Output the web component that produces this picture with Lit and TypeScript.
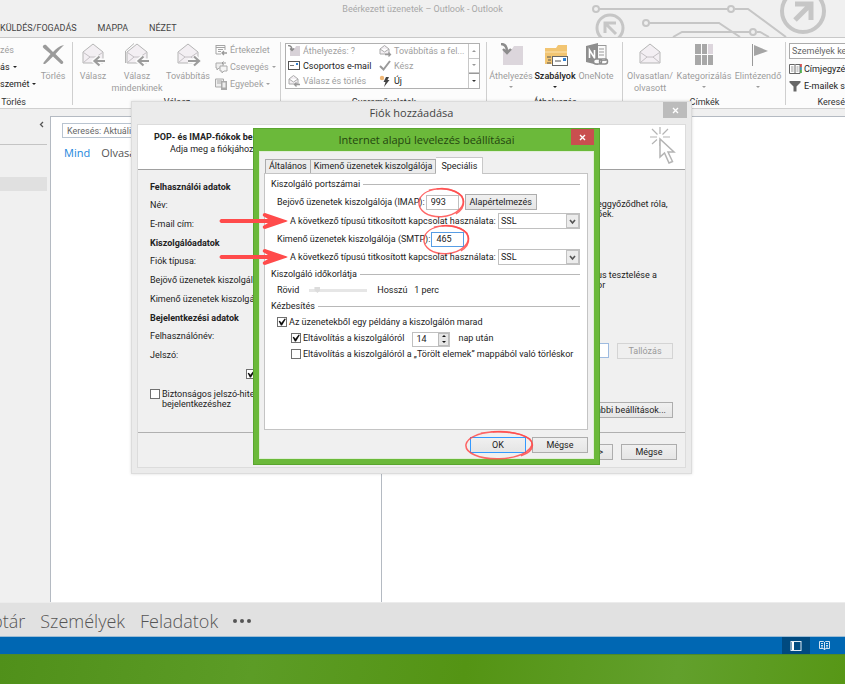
import { LitElement, html, svg, css, nothing } from "lit";
import { customElement, property } from "lit/decorators.js";

const base = css`
  * { box-sizing: border-box; }
  button, input, select { font: inherit; color: inherit; margin: 0; }
  button { padding: 0; border: 0; background: none; white-space: nowrap; }
  a { color: inherit; text-decoration: none; }
  svg { display: block; flex: none; }
`;

const controls = css`
  .push {
    height: 16px;
    padding: 0 6px;
    border: 1px solid #adadad;
    background: linear-gradient(#f0f0f0, #e5e5e5);
    line-height: 14px;
    text-align: center;
  }
  .push.off { color: #9a9a9a; border-color: #d4d4d4; background: #efefef; }
  .push.main { border-color: #3399ff; }
  .tick {
    appearance: none;
    width: 10px;
    height: 10px;
    flex: none;
    border: 1px solid #707070;
    background: #fff;
    display: grid;
    place-items: center;
  }
  .tick:checked::after {
    content: "";
    width: 8px;
    height: 8px;
    background: #111;
    clip-path: polygon(8% 42%, 24% 34%, 42% 58%, 84% 6%, 98% 14%, 50% 94%, 36% 94%);
  }
  .close {
    position: absolute;
    top: 0;
    height: 16px;
    display: grid;
    place-items: center;
  }
  .title {
    margin: 0;
    height: 22px;
    line-height: 22px;
    font-family: "Open Sans", "Noto Sans", sans-serif;
    font-size: 11px;
    font-weight: 400;
    text-align: center;
  }
`;

const cross = svg`<path d="M1 1L6 6M6 1L1 6" stroke="#fff" stroke-width="1.4" fill="none"/>`;

const envelope = svg`<path d="M2 9L12 1L22 9V20H2Z" fill="#f3eff3" stroke="#b5b5b5"/><path d="M2.5 9.5L9 14H15L21.5 9.5M2.5 19.5L9 14M21.5 19.5L15 14" fill="none" stroke="#c4c0c4"/>`;
const arrowL = svg`<path d="M24 18H14M18.500 13.500L13.500 18L18.500 22.500" fill="none" stroke="#fbfbfb" stroke-width="5"/><path d="M24 18H14M18.500 13.500L13.500 18L18.500 22.500" fill="none" stroke="#9c9c9c" stroke-width="2.200"/>`;
const arrowR = svg`<path d="M12 18H22M18 13.500L23 18L18 22.500" fill="none" stroke="#fbfbfb" stroke-width="5"/><path d="M12 18H22M18 13.500L23 18L18 22.500" fill="none" stroke="#9c9c9c" stroke-width="2.200"/>`;

const big: Record<string, unknown> = {
  del: svg`<path d="M2 3C4 1 5 2 6 3L12 9C15 6 18 3 23 2C20 5 17 8 14.500 11L22 18.500C23 20 21 22 19.500 20.500L12 13.500C9 16 7 19 4 21C2 21.500 2 20 3 19L9.500 11L3 5.500C2 4.500 1.500 4 2 3Z" fill="#9b9b9b"/>`,
  reply: svg`${envelope}${arrowL}`,
  replyAll: svg`<path d="M0.500 20V8L9 0.500" fill="none" stroke="#b5b5b5"/>${envelope}${arrowL}`,
  forward: svg`${envelope}${arrowR}`,
  move: svg`<path d="M4 6H13L15 3H24V22H4Z" fill="#dcd6dc"/><path d="M2 1C6 1 8 3 8 9M4 6L8 10L12 6" fill="none" stroke="#8c8c8c" stroke-width="2.400"/>`,
  rules: svg`<path d="M2 5H13L15 2H24V21H2Z" fill="#f2c572"/><path d="M2 9H24" stroke="#fbe3b3"/><rect x="9.500" y="13.500" width="15" height="9" fill="#fff" stroke="#666"/><rect x="20" y="15" width="3" height="3" fill="#2f7fd0"/><path d="M12 18H18M4 14H8M5 17H8M4 20H8" stroke="#555"/>`,
  onenote: svg`<rect x="12" y="2.500" width="10" height="15" fill="#fafafa" stroke="#999"/><path d="M15 6H20M15 9H20M15 12H20" stroke="#999"/><path d="M2 3L14 0V22L2 19Z" fill="#8e8e8e"/><path d="M5.500 15V7L10.500 15V7" fill="none" stroke="#fff" stroke-width="1.600"/><rect x="9.500" y="16" width="8" height="5" rx="2.500" fill="#fbfbfb" stroke="#8e8e8e" stroke-width="1.500"/><rect x="15.500" y="16" width="8" height="5" rx="2.500" fill="none" stroke="#8e8e8e" stroke-width="1.500"/>`,
  unread: envelope,
  cats: svg`<path d="M3 1H9V11H3ZM10 1H15V11H10ZM3 12H9V22H3ZM10 12H15V22H10ZM16 12H21V22H16Z" fill="#a8a8a8"/><path d="M16 1H21V11H16Z" fill="#ddd6dd"/>`,
  flag: svg`<path d="M6.500 1V23" stroke="#999"/><path d="M8 2L22 8L8 13Z" fill="#a5a5a5"/>`,
};

const small: Record<string, unknown> = {
  meeting: svg`<path d="M1 1.500H10V6M1 1V10H6M1 3.500H10M3 5.500H8M3 7.500H6" fill="none" stroke="#a5a5a5"/><path d="M12 9H7M9 7L7 9L9 11" fill="none" stroke="#999" stroke-width="1.300"/>`,
  chat: svg`<path d="M1 2H8V7H4L2 9V7H1Z" fill="#eee" stroke="#aaa"/><path d="M5 5H12V10H9L7 12V10H5Z" fill="#f5f5f5" stroke="#aaa"/><path d="M11 2H7M8.500 0.500L7 2L8.500 3.500" fill="none" stroke="#999"/>`,
  more: svg`<path d="M0.500 1H8.500V9H0.500ZM2 3H7M2 5H6" fill="#eee" stroke="#aaa"/><rect x="6" y="3" width="6" height="9" fill="#aaa"/><rect x="7.500" y="4.500" width="3" height="5" fill="#eee"/>`,
  folder: svg`<path d="M2 3H7L8 1H12V11H2Z" fill="#d8d2d8"/><path d="M0 0.500C3 0.500 4 2 4 5M2 3.500L4 5.500L6 3.500" fill="none" stroke="#8c8c8c" stroke-width="1.300"/>`,
  team: svg`<rect x="0.500" y="1.500" width="11" height="8" fill="#fff" stroke="#555"/><rect x="8" y="3" width="2" height="2" fill="#2f7fd0"/><path d="M2 5.500H6" stroke="#777"/>`,
  mailRight: svg`<path d="M1 4L5.500 0.500L10 4V9H1ZM1 4L5.500 7L10 4" fill="#f3eff3" stroke="#aaa"/><path d="M6 9.500H11M9.500 7.500L11.500 9.500L9.500 11.500" fill="none" stroke="#999" stroke-width="1.300"/>`,
  mailLeft: svg`<path d="M1 4L5.500 0.500L10 4V9H1ZM1 4L5.500 7L10 4" fill="#f3eff3" stroke="#aaa"/><path d="M12 9.500H7M8.500 7.500L6.500 9.500L8.500 11.500" fill="none" stroke="#999" stroke-width="1.300"/>`,
  done: svg`<path d="M1 6L4.500 9.500L11 1" fill="none" stroke="#9a9a9a" stroke-width="2"/>`,
  bolt: svg`<path d="M7 2H10L8.500 5H10.500L5 12L6.500 7H4.500Z" fill="#444"/><circle cx="3" cy="3" r="2.200" fill="#f0b775"/>`,
  book: svg`<path d="M0.500 1.500H5.500L6 2L6.500 1.500H11V10.500H0.500ZM6 2V11" fill="#fff" stroke="#666"/><path d="M2 4H4.500M2 6H4.500M2 8H4.500M7.500 4H9.500M7.500 6H9.500M7.500 8H9.500" stroke="#999"/><path d="M12 1V4" stroke="#c33" stroke-width="1.500"/><path d="M12 4V7" stroke="#38a" stroke-width="1.500"/><path d="M12 7V10" stroke="#3a3" stroke-width="1.500"/>`,
  funnel: svg`<path d="M0.500 1H11.500V2.500L7.500 6.500V11.500H4.500V6.500L0.500 2.500Z" fill="#666"/>`,
};

@customElement("ribbon-button")
class RibbonButton extends LitElement {
  @property() icon = "";
  @property() label = "";
  @property() label2 = "";
  @property({ type: Boolean }) drop = false;
  @property({ type: Boolean }) active = false;
  static styles = [base, css`
    :host { display: block; }
    .btn { display: flex; flex-direction: column; align-items: center; width: 100%; color: #9c9c9c; line-height: 12px; }
    .btn.active { color: #222; font-weight: 500; }
    .lbl { margin-top: 3px; }
    .tri { border: 2px solid transparent; border-top-color: currentColor; border-bottom: 0; margin-top: 4px; }
  `];
  render() {
    return html`<button class="btn ${this.active ? "active" : ""}">
      <svg width="25" height="24" viewBox="0 0 25 24">${big[this.icon]}</svg>
      <span class="lbl">${this.label}</span>
      ${this.label2 ? html`<span>${this.label2}</span>` : nothing}
      ${this.drop ? html`<span class="tri"></span>` : nothing}
    </button>`;
  }
}

@customElement("ribbon-item")
class RibbonItem extends LitElement {
  @property() icon = "";
  @property() label = "";
  @property({ type: Boolean }) drop = false;
  @property({ type: Boolean }) active = false;
  static styles = [base, css`
    :host { display: block; }
    .btn { display: flex; align-items: center; gap: 2px; color: #a0a0a0; height: 14px; }
    .btn.active { color: #222; }
    .tri { border: 2px solid transparent; border-top-color: currentColor; border-bottom: 0; margin-left: 1px; }
  `];
  render() {
    return html`<button class="btn ${this.active ? "active" : ""}">
      ${this.icon ? html`<svg width="13" height="12" viewBox="0 0 13 12">${small[this.icon]}</svg>` : nothing}
      <span>${this.label}</span>
      ${this.drop ? html`<span class="tri"></span>` : nothing}
    </button>`;
  }
}

@customElement("outlook-ribbon")
class OutlookRibbon extends LitElement {
  static styles = [base, css`
    :host { display: block; font-size: 9px; color: #333; }
    .top { position: relative; height: 37px; overflow: hidden; }
    .art { position: absolute; right: 0; top: 0; }
    .title { position: absolute; left: 0; right: 0; top: 3px; margin: 0; text-align: center; font-size: 9px; font-weight: 400; line-height: 13px; color: #a8a8a8; }
    .tabs { position: relative; display: flex; gap: 21px; padding-top: 22px; font-size: 9px; line-height: 13px; color: #444; }
    .bar { display: flex; height: 72px; border-top: 1px solid #c8c8c8; border-bottom: 1px solid #cfcfcf; background: #fcfcfc; overflow: hidden; }
    .group { display: flex; flex-direction: column; flex: none; position: relative; padding-top: 5px; }
    .group::after { content: ""; position: absolute; right: 0; top: 4px; bottom: 3px; width: 1px; background: #cfcfcf; }
    .group:last-child { flex: 1 0 0; width: 0; }
    .group:last-child::after { display: none; }
    .body { display: flex; flex: 1; align-items: flex-start; }
    .cap { text-align: center; line-height: 12px; height: 12px; color: #333; }
    .cap.edge { text-align: right; }
    .g1 { width: 73px; } .g2 { width: 208px; } .g3 { width: 206px; } .g4 { width: 136px; } .g5 { width: 163px; }
    .g1 .cap { padding-right: 47px; text-align: right; }
    .stack { display: flex; flex-direction: column; gap: 3px; }
    .w0 { width: 37px; } .w1 { width: 32px; } .w2 { width: 42px; } .w3 { width: 48px; } .w4 { width: 54px; } .w5 { width: 40px; }
    .gallery { margin-left: 4px; width: 195px; height: 46px; border: 1px solid #b0b0b0; background: #fff; display: flex; }
    .cells { display: grid; grid-template-columns: 91px 1fr; padding-left: 2px; flex: 1; align-content: space-around; }
    .steps { width: 11px; display: grid; border-left: 1px solid #c8c8c8; }
    .steps button { border-bottom: 1px solid #c8c8c8; display: grid; place-items: center; color: #999; }
    .steps button:last-child { border-bottom: 0; color: #333; border-top: 1px solid #999; }
    .up { border: 2px solid transparent; border-bottom-color: currentColor; border-top: 0; }
    .dn { border: 2px solid transparent; border-top-color: currentColor; border-bottom: 0; }
    .find { width: 80px; height: 16px; border: 1px solid #ababab; padding: 0 2px; background: #fff; color: #555; }
    .find::placeholder { color: #666; opacity: 1; }
    .last { margin-left: 3px; }
  `];
  render() {
    return html`
      <div class="top">
        <svg class="art" width="256" height="37" viewBox="0 0 256 37" fill="none" stroke="#c6c6c6" stroke-width="2">
          <circle cx="7" cy="9" r="3"/><path d="M10 9H139M146 9H159L197 37"/><circle cx="142" cy="9" r="3"/>
          <circle cx="57" cy="23" r="3"/><path d="M60 23H130L151 37M84 37L93 32H161M168 32H171L180 37"/><circle cx="164" cy="32" r="3" fill="#f0f0f0"/>
          <circle cx="21" cy="28" r="13" stroke-width="3"/><path d="M27 34L17 24M16 33V23H27" stroke-width="3"/>
          <circle cx="214" cy="11" r="21" stroke-width="4"/><path d="M206 20L221 5M206 4H222V20" stroke-width="5"/>
        </svg>
        <h1 class="title">Beérkezett üzenetek – Outlook - Outlook</h1>
        <nav class="tabs"><a href="#">KÜLDÉS/FOGADÁS</a><a href="#">MAPPA</a><a href="#">NÉZET</a></nav>
      </div>
      <div class="bar">
        <section class="group g1">
          <div class="body">
            <div class="stack w0">
              <ribbon-item label="zés"></ribbon-item>
              <ribbon-item active drop label="ás"></ribbon-item>
              <ribbon-item active drop label="szemét"></ribbon-item>
            </div>
            <ribbon-button class="w1" icon="del" label="Törlés"></ribbon-button>
          </div>
          <div class="cap">Törlés</div>
        </section>
        <section class="group g2">
          <div class="body">
            <ribbon-button class="w5" icon="reply" label="Válasz"></ribbon-button>
            <ribbon-button class="w3" icon="replyAll" label="Válasz" label2="mindenkinek"></ribbon-button>
            <ribbon-button class="w4" icon="forward" label="Továbbítás"></ribbon-button>
            <div class="stack">
              <ribbon-item icon="meeting" label="Értekezlet"></ribbon-item>
              <ribbon-item icon="chat" drop label="Csevegés"></ribbon-item>
              <ribbon-item icon="more" drop label="Egyebek"></ribbon-item>
            </div>
          </div>
          <div class="cap">Válasz</div>
        </section>
        <section class="group g3">
          <div class="body">
            <div class="gallery">
              <div class="cells">
                <ribbon-item icon="folder" label="Áthelyezés: ?"></ribbon-item>
                <ribbon-item icon="mailRight" label="Továbbítás a fel..."></ribbon-item>
                <ribbon-item active icon="team" label="Csoportos e-mail"></ribbon-item>
                <ribbon-item icon="done" label="Kész"></ribbon-item>
                <ribbon-item icon="mailLeft" label="Válasz és törlés"></ribbon-item>
                <ribbon-item active icon="bolt" label="Új"></ribbon-item>
              </div>
              <div class="steps">
                <button aria-label="Fel"><span class="up"></span></button>
                <button aria-label="Le"><span class="dn"></span></button>
                <button aria-label="Több"><span class="dn"></span></button>
              </div>
            </div>
          </div>
          <div class="cap">Gyorsműveletek</div>
        </section>
        <section class="group g4">
          <div class="body">
            <ribbon-button class="w3" icon="move" label="Áthelyezés" drop></ribbon-button>
            <ribbon-button class="w5" icon="rules" label="Szabályok" drop active></ribbon-button>
            <ribbon-button class="w2" icon="onenote" label="OneNote"></ribbon-button>
          </div>
          <div class="cap">Áthelyezés</div>
        </section>
        <section class="group g5">
          <div class="body">
            <ribbon-button class="w4" icon="unread" label="Olvasatlan/" label2="olvasott"></ribbon-button>
            <ribbon-button class="w4" icon="cats" label="Kategorizálás" drop></ribbon-button>
            <ribbon-button class="w4" icon="flag" label="Elintézendő" drop></ribbon-button>
          </div>
          <div class="cap">Címkék</div>
        </section>
        <section class="group">
          <div class="body">
            <div class="stack last">
              <input class="find" placeholder="Személyek ke" aria-label="Személyek keresése">
              <ribbon-item active icon="book" label="Címjegyzé"></ribbon-item>
              <ribbon-item active icon="funnel" label="E-mailek s"></ribbon-item>
            </div>
          </div>
          <div class="cap edge">Keresé</div>
        </section>
      </div>`;
  }
}

@customElement("account-window")
class AccountWindow extends LitElement {
  static styles = [base, controls, css`
    :host { display: flex; flex-direction: column; padding: 0 5px 5px; background: #ebebeb; border: 1px solid #dcdcdc; font-size: 9px; color: #222; box-shadow: 0 0 3px #0002; }
    .title { color: #444; }
    .close { right: 4px; width: 24px; background: #bcbcbc; }
    .client { flex: 1; display: flex; flex-direction: column; border: 1px solid #dcdcdc; background: #f0f0f0; }
    .head { display: flex; justify-content: space-between; background: #fff; border-bottom: 1px solid #a0a0a0; height: 45px; padding: 2px 8px 0 16px; line-height: 12px; }
    .head b { display: block; margin-top: 4px; }
    .head span { display: block; padding-left: 16px; }
    .form { flex: 1; display: flex; justify-content: space-between; padding: 8px 12px 0; white-space: nowrap; overflow: hidden; }
    .left { width: 120px; }
    .row { height: 19px; line-height: 18px; }
    .row.sec { height: 18px; font-weight: 700; }
    .save { display: flex; justify-content: flex-end; padding: 4px 14px 0 0; height: 16px; }
    .spa { display: flex; gap: 2px; align-items: flex-start; line-height: 10px; margin-top: 8px; }
    .right { width: 120px; display: grid; grid-template-rows: 21px 71px 73px 59px 1fr; align-items: start; justify-items: end; line-height: 10px; }
    .note { justify-self: start; margin: 0 0 0 44px; }
    .browse { display: flex; gap: 8px; }
    .file { width: 48px; height: 15px; border: 1px solid #9ebbe0; background: #fff; }
    .wide { width: 56px; }
    .foot { height: 35px; border-top: 1px solid #b0b0b0; display: flex; justify-content: flex-end; gap: 8px; padding: 11px 8px 0; }
  `];
  render() {
    return html`
      <h2 class="title">Fiók hozzáadása</h2>
      <button class="close" aria-label="Bezárás"><svg width="7" height="7" viewBox="0 0 7 7">${cross}</svg></button>
      <div class="client">
        <header class="head">
          <div><b>POP- és IMAP-fiókok be</b><span>Adja meg a fiókjához ta</span></div>
          <svg width="28" height="38" viewBox="0 0 28 38" fill="none" stroke="#b4b4b4" stroke-width="1.200">
            <path d="M11 0V7M11 13V19M1 10H8M14 10H21M3 2L8.500 7.500M19 2L13.500 7.500M3 17L8 12.500" />
            <path d="M11 12V30L15.500 26L20 36L23.500 34.500L19 25H25Z" fill="#fff" stroke-width="1.500"/>
          </svg>
        </header>
        <div class="form">
          <div class="left">
            <div class="row sec">Felhasználói adatok</div>
            <div class="row">Név:</div>
            <div class="row">E-mail cím:</div>
            <div class="row sec">Kiszolgálóadatok</div>
            <div class="row">Fiók típusa:</div>
            <div class="row">Bejövő üzenetek kiszolgáló</div>
            <div class="row">Kimenő üzenetek kiszolgáló</div>
            <div class="row sec">Bejelentkezési adatok</div>
            <div class="row">Felhasználónév:</div>
            <div class="row">Jelszó:</div>
            <div class="save"><input class="tick" type="checkbox" checked aria-label="Jelszó megjegyzése"></div>
            <label class="spa"><input class="tick" type="checkbox"><span>Biztonságos jelszó-hite<br>bejelentkezéshez</span></label>
          </div>
          <div class="right">
            <span></span>
            <p class="note">eggyőződhet róla,<br>őek.</p>
            <p class="note">us tesztelése a<br>or</p>
            <div class="browse"><input class="file" aria-label="Adatfájl"><button class="push off wide" disabled>Tallózás</button></div>
            <button class="push">További beállítások...</button>
          </div>
        </div>
        <footer class="foot">
          <button class="push wide">Tovább &gt;</button>
          <button class="push wide">Mégse</button>
        </footer>
      </div>`;
  }
}

@customElement("mark-ring")
class MarkRing extends LitElement {
  static styles = css`
    :host { position: absolute; inset: -7px -5px -7px -7px; pointer-events: none; }
    svg { display: block; width: 100%; height: 100%; overflow: visible; }
  `;
  render() {
    return html`<svg viewBox="0 0 100 100" preserveAspectRatio="none" fill="none" stroke="#ff4b4b" stroke-opacity=".85" stroke-width="1.500">
      <path vector-effect="non-scaling-stroke" d="M22 8C45 -3 80 2 95 28C108 62 82 96 50 99C20 101 -2 78 0 48C2 24 18 8 40 3"/>
      <path vector-effect="non-scaling-stroke" d="M40 3C70 -3 98 18 99 48C100 66 92 80 82 89"/>
    </svg>`;
  }
}

@customElement("mark-arrow")
class MarkArrow extends LitElement {
  static styles = css`
    :host { position: absolute; right: 100%; top: 50%; margin: -9px 2px 0 0; pointer-events: none; }
    svg { display: block; }
  `;
  render() {
    return html`<svg width="69" height="18" viewBox="0 0 69 18"><path d="M2 7H49L44 4Q43 1 46 1L68 8.500Q69 9 68 9.500L46 17Q43 17 44 14L49 11H2Q-1 9 2 7Z" fill="#ff4b4b"/></svg>`;
  }
}

@customElement("settings-window")
class SettingsWindow extends LitElement {
  static styles = [base, controls, css`
    :host { display: flex; flex-direction: column; padding: 0 5px 5px; background: #6bb93a; border: 1px solid #5aa52f; font-size: 9px; color: #222; }
    .title { color: #23450f; }
    .close { right: 5px; width: 23px; background: #c94f4f; }
    .client { flex: 1; display: flex; flex-direction: column; background: #f0f0f0; border: 1px solid #dfeed6; padding: 4px 5px 5px 4px; }
    .tabs { display: flex; align-items: flex-end; padding-left: 1px; height: 17px; }
    .tab { height: 14px; padding: 0 3px; border: 1px solid #acacac; border-bottom: 0; background: #ececec; line-height: 13px; }
    .tab + .tab { border-left: 0; }
    .tab.on { height: 17px; padding: 0 5px; background: #fff; border-color: #c8c8c8; position: relative; margin-bottom: -1px; }
    .pane { flex: 1; background: #fff; border: 1px solid #c4c4c4; padding: 2px 7px 0 6px; }
    .set { border: 0; margin: 0; padding: 0; }
    .lg { display: flex; align-items: center; gap: 3px; height: 16px; padding: 0; width: 100%; }
    .lg::after { content: ""; flex: 1; height: 1px; background: #b8b8b8; margin-top: 1px; }
    .row { display: flex; align-items: center; height: 18px; padding-left: 6px; white-space: nowrap; }
    .row.first { height: 20px; }
    .row.short { height: 16px; }
    .row.in { padding-left: 19px; position: relative; }
    .row.deep { padding-left: 20px; }
    .fill { flex: 1; }
    .box { position: relative; margin-left: 1px; }
    .num { display: block; width: 33px; height: 15px; border: 1px solid #c0c0c0; background: #fff; padding: 0 0 0 4px; }
    .num.focus { border-color: #569de5; }
    .dflt { margin-left: 6px; width: 72px; padding: 0; }
    .pick { position: relative; width: 82px; height: 16px; }
    .pick select { appearance: none; width: 100%; height: 100%; border: 1px solid #c0c0c0; background: #fff; padding: 0 2px; border-radius: 0; }
    .pick svg { position: absolute; right: 1px; top: 1px; pointer-events: none; }
    .where { position: relative; }
    .slider { appearance: none; width: 58px; height: 10px; margin: 0 10px; background: linear-gradient(#e6e6e6, #e6e6e6) center / 100% 3px no-repeat; }
    .slider::-webkit-slider-thumb { appearance: none; width: 6px; height: 6px; background: #dcdcdc; clip-path: polygon(0 0, 100% 0, 100% 50%, 50% 100%, 0 50%); }
    .check { display: flex; align-items: center; gap: 2px; }
    .spin { display: flex; width: 38px; height: 15px; border: 1px solid #c0c0c0; margin: 2px 8px 0; background: #fff; }
    .spin input { flex: 1; width: 0; border: 0; padding: 0 0 0 3px; background: none; }
    .arrows { display: grid; width: 11px; background: #e6e6e6; border: 1px solid #bbb; }
    .arrows button { display: grid; place-items: center; }
    .up { border: 2px solid transparent; border-bottom-color: #111; border-top: 0; }
    .dn { border: 2px solid transparent; border-top-color: #111; border-bottom: 0; }
    .foot { display: flex; justify-content: flex-end; gap: 6px; padding-top: 7px; }
    .foot .push { width: 56px; display: block; }
    .ok { position: relative; }
    .ok mark-ring { inset: -6px -7px -6px -4px; }
  `];
  pick(id: string) {
    return html`<span class="pick"><select id=${id}><option>SSL</option></select>
      <svg width="13" height="14" viewBox="0 0 13 14"><rect x="0.500" y="0.500" width="12" height="13" fill="#ececec" stroke="#c2c2c2"/><path d="M4 6L6.500 9L9 6" fill="none" stroke="#555" stroke-width="1.600"/></svg></span>`;
  }
  render() {
    return html`
      <h2 class="title">Internet alapú levelezés beállításai</h2>
      <button class="close" aria-label="Bezárás"><svg width="7" height="7" viewBox="0 0 7 7">${cross}</svg></button>
      <div class="client">
        <div class="tabs" role="tablist">
          <button class="tab" role="tab">Általános</button>
          <button class="tab" role="tab">Kimenő üzenetek kiszolgálója</button>
          <button class="tab on" role="tab" aria-selected="true">Speciális</button>
        </div>
        <div class="pane">
          <section class="set">
            <div class="lg">Kiszolgáló portszámai</div>
            <div class="row first"><label for="imap">Bejövő üzenetek kiszolgálója (IMAP):</label>
              <span class="box"><input class="num" id="imap" value="993"><mark-ring></mark-ring></span>
              <button class="push dflt">Alapértelmezés</button></div>
            <div class="row in"><label class="where" for="ssl1">A következő típusú titkosított kapcsolat használata:<mark-arrow></mark-arrow></label><span class="fill"></span>${this.pick("ssl1")}</div>
            <div class="row"><label for="smtp">Kimenő üzenetek kiszolgálója (SMTP):</label>
              <span class="box"><input class="num focus" id="smtp" value="465"><mark-ring></mark-ring></span></div>
            <div class="row in"><label class="where" for="ssl2">A következő típusú titkosított kapcsolat használata:<mark-arrow></mark-arrow></label><span class="fill"></span>${this.pick("ssl2")}</div>
          </section>
          <section class="set">
            <div class="lg">Kiszolgáló időkorlátja</div>
            <div class="row short"><label for="time">Rövid</label><input class="slider" id="time" type="range" min="0" max="10" value="1"><span>Hosszú&nbsp;&nbsp; 1 perc</span></div>
          </section>
          <section class="set">
            <div class="lg">Kézbesítés</div>
            <div class="row short"><label class="check"><input class="tick" type="checkbox" checked>Az üzenetekből egy példány a kiszolgálón marad</label></div>
            <div class="row short deep"><label class="check"><input class="tick" type="checkbox" checked>Eltávolítás a kiszolgálóról</label>
              <span class="spin"><input value="14" aria-label="Napok száma"><span class="arrows"><button aria-label="Több"><span class="up"></span></button><button aria-label="Kevesebb"><span class="dn"></span></button></span></span>
              <span>nap után</span></div>
            <div class="row short deep"><label class="check"><input class="tick" type="checkbox">Eltávolítás a kiszolgálóról a „Törölt elemek” mappából való törléskor</label></div>
          </section>
        </div>
        <footer class="foot">
          <span class="ok"><button class="push main">OK</button><mark-ring></mark-ring></span>
          <button class="push">Mégse</button>
        </footer>
      </div>`;
  }
}

@customElement("app-root")
class AppRoot extends LitElement {
  static styles = [base, css`
    :host { display: flex; flex-direction: column; position: relative; min-height: 100vh; overflow: hidden; background: #f0f0f0; font-family: Roboto, "Open Sans", sans-serif; font-size: 9px; color: #333; }
    .main { flex: 1; display: flex; padding-top: 7px; min-height: 380px; }
    .folders { width: 50px; padding-right: 3px; }
    .fold { display: flex; justify-content: flex-end; align-items: center; width: 100%; height: 29px; padding: 0 3px 12px; border-bottom: 1px solid #c4c4c4; }
    .current { height: 14px; margin-top: 32px; background: #e0e0e0; }
    .list { width: 332px; border: 1px solid #b4bac2; border-bottom: 0; background: #fff; padding: 6px 11px; }
    .search { width: 240px; height: 15px; border: 1px solid #b9c4d0; padding: 0 4px; display: block; font-size: 9px; background: #fff; }
    .search::placeholder { color: #666; opacity: 1; }
    .filter { display: flex; gap: 11px; padding: 7px 2px; font-family: "Open Sans", "Noto Sans", sans-serif; font-size: 11px; line-height: 16px; color: #555; }
    .filter .on { color: #1a86dc; }
    .read { flex: 1; border-top: 1px solid #b4bac2; background: #fff; }
    .nav { display: flex; align-items: center; gap: 15px; height: 34px; padding-top: 3px; background: #e1e1e1; border-top: 1px solid #ececec; font-family: "Open Sans", "Noto Sans", sans-serif; font-size: 18px; font-weight: 300; color: #555; overflow: hidden; }
    .nav a:first-child { margin-left: -8px; }
    .dots { display: flex; gap: 3px; }
    .dots i { width: 4px; height: 4px; border-radius: 2px; background: #555; }
    .status { display: flex; justify-content: flex-end; height: 18px; background: #0067b3; border-top: 1px solid #9dbcd4; padding-right: 7px; }
    .view { width: 28px; display: grid; place-items: center; }
    .view.on { background: #004a80; }
    .desk { height: 30px; background: linear-gradient(100deg, #50901a, #5c9c26 30%, #549414 55%, #62a02c 80%, #579716); border-top: 1px solid #4d8a2a; }
    account-window { position: absolute; left: 131px; top: 101px; width: 561px; height: 373px; }
    settings-window { position: absolute; left: 253px; top: 128px; width: 347px; height: 337px; }
  `];
  render() {
    return html`
      <outlook-ribbon></outlook-ribbon>
      <div class="main">
        <aside class="folders">
          <button class="fold" aria-label="Mappaablak összecsukása"><svg width="5" height="7" viewBox="0 0 5 7"><path d="M4 1L1.500 3.500L4 6" fill="none" stroke="#555" stroke-width="1.300"/></svg></button>
          <div class="current"></div>
        </aside>
        <section class="list">
          <input class="search" placeholder="Keresés: Aktuális" aria-label="Keresés">
          <div class="filter"><a class="on" href="#">Mind</a><a href="#">Olvasa</a></div>
        </section>
        <section class="read"></section>
      </div>
      <nav class="nav"><a href="#">ptár</a><a href="#">Személyek</a><a href="#">Feladatok</a><span class="dots"><i></i><i></i><i></i></span></nav>
      <div class="status">
        <button class="view on" aria-label="Normál"><svg width="12" height="10" viewBox="0 0 12 10"><rect x="1" y="0.500" width="10" height="9" fill="none" stroke="#dfe9f2"/><path d="M2 1H4V9H2Z" fill="#fff"/></svg></button>
        <button class="view" aria-label="Olvasás"><svg width="11" height="11" viewBox="0 0 11 11"><path d="M0.500 1.500H4.500L5.500 2.500L6.500 1.500H10.500V8.500H6.500L5.500 10L4.500 8.500H0.500ZM5.500 2V10M2 3.500H4M2 5.500H4M2 7H4M7 3.500H9M7 5.500H9M7 7H9" fill="none" stroke="#d2e2f0"/></svg></button>
      </div>
      <div class="desk"></div>
      <account-window></account-window>
      <settings-window></settings-window>`;
  }
}
